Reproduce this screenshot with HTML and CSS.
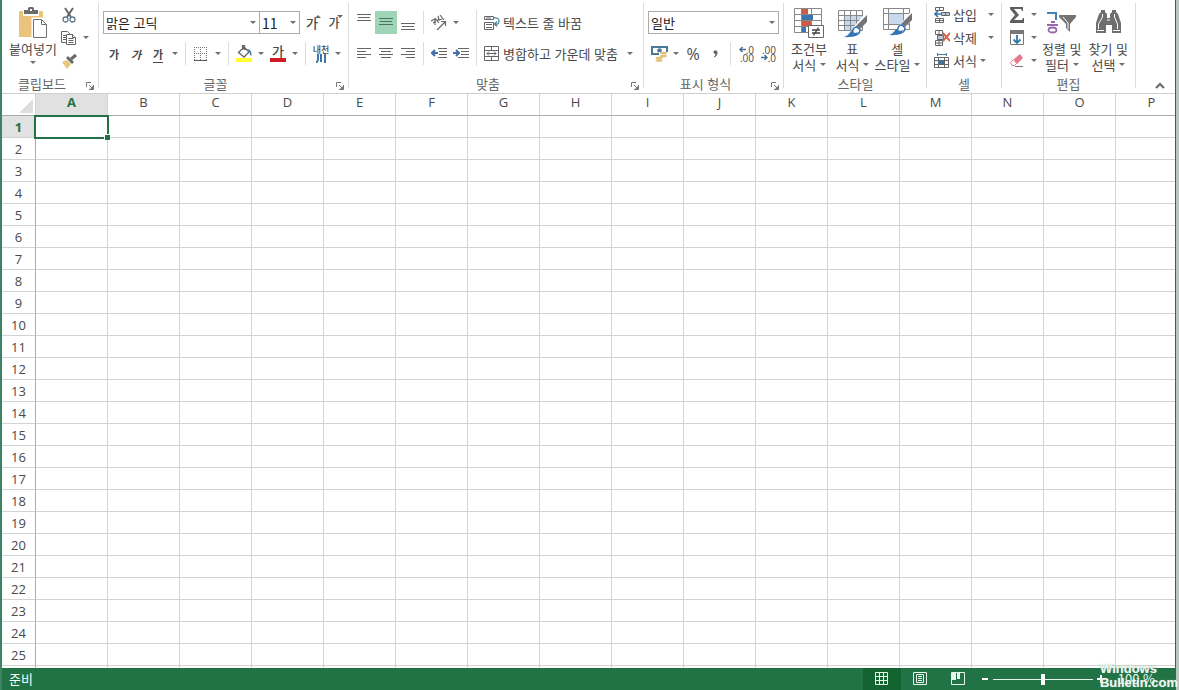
FILE: index.html
```html
<!DOCTYPE html>
<html lang="ko">
<head>
<meta charset="utf-8">
<title>스프레드시트</title>
<link rel="stylesheet" href="styles.css">
</head>
<body>
<div class="window">
  <header class="ribbon">
    <section class="group clipboard">
      <div class="group-body big-row">
        <button class="big paste">
          <svg width="30" height="32" viewBox="0 0 30 32"><path fill="#eac47c" d="M1 4h24v26H1z"/><path fill="#fff" d="M5 3h16v6H5z"/><path fill="#6b6b6b" d="M6 3h4V1.500q0-1.500 1.500-1.500h3Q16 0 16 1.500V3h4v4H6z"/><path fill="#fff" d="M12 2h2v2h-2z"/><path fill="#fff" stroke="#fff" stroke-width="4" d="M15.500 12.500h8l5 5v13h-13z"/><path fill="#fff" stroke="#6f6f6f" d="M15.500 12.500h8l5 5v13h-13zM23.500 12.500v5h5"/></svg>
          <span>붙여넣기</span><i class="caret"></i>
        </button>
        <div class="stack clip-stack">
          <button class="icon" aria-label="잘라내기"><svg width="16" height="16" viewBox="0 0 16 16"><g fill="none" stroke="#666"><path stroke-width="2" d="M4 1l6 9M12 1L6 10"/><circle cx="4.500" cy="12.500" r="2.500" stroke="#5f7a91" stroke-width="1.300"/><circle cx="11.500" cy="12.500" r="2.500" stroke="#5f7a91" stroke-width="1.300"/></g></svg></button>
          <div class="row"><button class="icon" aria-label="복사"><svg width="16" height="16" viewBox="0 0 16 16"><g fill="#fff" stroke="#666"><path d="M.5 1.500h6l3 3v8h-9z"/><path d="M2 5.500h4M2 7.500h4M2 9.500h4"/><path d="M5.500 4.500h6l3 3v7h-9z"/><path d="M7.500 8.500h5M7.500 10.500h5M7.500 12.500h5M11.500 4.500v3h3"/></g></svg></button><button class="drop" aria-label="복사 옵션"><i class="caret"></i></button></div>
          <button class="icon" aria-label="서식 복사"><svg width="16" height="16" viewBox="0 0 16 16"><path fill="#e6c67f" d="M1 9l5-2 4 4-4 5z"/><path fill="#666" d="M5 5l2-2 6 6-2 2z"/><path fill="none" stroke="#666" stroke-width="3" d="M10 6l5-4"/></svg></button>
        </div>
      </div>
      <div class="caption with-launch"><span>클립보드</span><button class="launch" aria-label="클립보드 설정"><svg width="8" height="8" viewBox="0 0 8 8"><path fill="none" stroke="#777" d="M.5 5V.5H5M3 3l3 3M7.500 3v4.500H3"/><path fill="#777" d="M7 4v3H4z"/></svg></button></div>
    </section>

    <section class="group font">
      <div class="group-body rows">
        <div class="row">
          <label class="combo family"><select aria-label="글꼴"><option>맑은 고딕</option></select></label><label class="combo size"><select aria-label="글꼴 크기"><option>11</option></select></label>
          <button class="icon glyph grow" aria-label="글꼴 크게"><span>가</span><i class="mark up"></i></button>
          <button class="icon glyph shrink" aria-label="글꼴 작게"><span>가</span><i class="mark"></i></button>
        </div>
        <div class="row">
          <button class="icon letter" aria-label="굵게"><b>가</b></button>
          <button class="icon letter" aria-label="기울임꼴"><em>가</em></button>
          <button class="icon letter" aria-label="밑줄"><u>가</u></button>
          <button class="drop" aria-label="밑줄 옵션"><i class="caret"></i></button>
          <i class="sep"></i>
          <button class="icon" aria-label="테두리"><svg width="14" height="14" viewBox="0 0 14 14"><path fill="none" stroke="#777" stroke-dasharray="1 1" d="M0 .5h14M0 6.500h14M.5 0v13M6.500 0v13M12.500 0v13"/><path stroke="#555" d="M0 13.500h13"/></svg></button>
          <button class="drop" aria-label="테두리 옵션"><i class="caret"></i></button>
          <i class="sep"></i>
          <button class="icon" aria-label="채우기 색"><svg width="16" height="17" viewBox="0 0 16 17"><path fill="#ff3" d="M0 13h16v4H0z"/><path fill="#fff" stroke="#666" stroke-width="1.300" d="M2.500 7.500L8 2l5 5-5 5zM6.500 5V.7h2V5"/><path fill="#4276ae" d="M11 4q5 0 4.500 7-2-1-2-4z"/></svg></button>
          <button class="drop" aria-label="채우기 색 옵션"><i class="caret"></i></button>
          <button class="icon fontcolor" aria-label="글꼴 색"><span>가</span></button>
          <button class="drop" aria-label="글꼴 색 옵션"><i class="caret"></i></button>
          <i class="sep"></i>
          <button class="icon phonetic" aria-label="윗주"><span>내천</span><svg width="10" height="9" viewBox="0 0 10 9"><path fill="none" stroke="#3f73a8" stroke-width="2" d="M2 0v5q0 3-2 3.500M5 0v8M9 0v9"/></svg></button>
          <button class="drop" aria-label="윗주 옵션"><i class="caret"></i></button>
        </div>
      </div>
      <div class="caption with-launch"><span>글꼴</span><button class="launch" aria-label="글꼴 설정"><svg width="8" height="8" viewBox="0 0 8 8"><path fill="none" stroke="#777" d="M.5 5V.5H5M3 3l3 3M7.500 3v4.500H3"/><path fill="#777" d="M7 4v3H4z"/></svg></button></div>
    </section>

    <section class="group align">
      <div class="group-body columns">
        <div class="rows">
          <div class="row">
            <button class="icon" aria-label="위쪽 맞춤"><svg width="14" height="17" viewBox="0 0 14 17"><path stroke="#666" d="M0 .5h14M1 3.500h12M0 6.500h14"/></svg></button>
            <button class="icon on" aria-label="가운데 맞춤(세로)"><svg width="14" height="17" viewBox="0 0 14 17"><path stroke="#4f6f60" d="M0 4.500h14M1 7.500h12M0 10.500h14"/></svg></button>
            <button class="icon" aria-label="아래쪽 맞춤"><svg width="14" height="17" viewBox="0 0 14 17"><path stroke="#666" d="M0 9.500h14M1 12.500h12M0 15.500h14"/></svg></button>
            <i class="sep"></i>
            <button class="icon" aria-label="방향"><svg width="16" height="16" viewBox="0 0 16 16"><g fill="none" stroke="#666" stroke-width="1.200"><path d="M0 6l4-2 0 6M2 8l3-2M4 3l4 5M6 6l2-2M7 1l1 4 3-1M9 0l4 5M6 15l8-8M10 6.500h4.500V11"/></g></svg></button>
            <button class="drop" aria-label="방향 옵션"><i class="caret"></i></button>
          </div>
          <div class="row">
            <button class="icon" aria-label="왼쪽 맞춤"><svg width="14" height="11" viewBox="0 0 14 11"><path stroke="#666" d="M0 .5h14M0 3.500h9M0 6.500h14M0 9.500h9"/></svg></button>
            <button class="icon" aria-label="가운데 맞춤"><svg width="14" height="11" viewBox="0 0 14 11"><path stroke="#666" d="M0 .5h14M2 3.500h10M0 6.500h14M2 9.500h10"/></svg></button>
            <button class="icon" aria-label="오른쪽 맞춤"><svg width="14" height="11" viewBox="0 0 14 11"><path stroke="#666" d="M0 .5h14M5 3.500h9M0 6.500h14M5 9.500h9"/></svg></button>
            <i class="sep"></i>
            <button class="icon" aria-label="내어쓰기"><svg width="16" height="11" viewBox="0 0 16 11"><path stroke="#666" d="M7 .5h9M8 3.500h8M8 6.500h8M7 9.500h9"/><path fill="none" stroke="#3f6ea8" stroke-width="2" d="M7 5H1M4 2L1 5l3 3"/></svg></button>
            <button class="icon" aria-label="들여쓰기"><svg width="16" height="11" viewBox="0 0 16 11"><path stroke="#666" d="M5 .5h11M8 3.500h8M8 6.500h8M5 9.500h11"/><path fill="none" stroke="#3f6ea8" stroke-width="2" d="M0 5h6M3 2l3 3-3 3"/></svg></button>
          </div>
        </div>
        <i class="sep"></i>
        <div class="rows">
          <button class="wide"><svg width="16" height="16" viewBox="0 0 16 16"><g fill="none" stroke="#666"><path d="M.5 1.500h9v3h-9zM.5 7.500h9v7h-9zM2 9.500h6M2 12.500h6M2 3h5"/></g><path fill="none" stroke="#477c9c" stroke-width="1.200" d="M9 3q6-1 6 3t-4 3M13 6.500L10.500 9l2.500 2.500"/></svg><span>텍스트 줄 바꿈</span></button>
          <div class="row"><button class="wide"><svg width="16" height="16" viewBox="0 0 16 16"><path fill="none" stroke="#666" d="M.5.500h14v14H.5zM0 4.500h15M0 10.500h15M7.500 0v4M7.500 11v4M3 7.500h9M5 5.500l-2 2 2 2M10 5.500l2 2-2 2"/></svg><span>병합하고 가운데 맞춤</span></button><button class="drop merge-drop" aria-label="병합 옵션"><i class="caret"></i></button></div>
        </div>
      </div>
      <div class="caption with-launch"><span>맞춤</span><button class="launch" aria-label="맞춤 설정"><svg width="8" height="8" viewBox="0 0 8 8"><path fill="none" stroke="#777" d="M.5 5V.5H5M3 3l3 3M7.500 3v4.500H3"/><path fill="#777" d="M7 4v3H4z"/></svg></button></div>
    </section>

    <section class="group number">
      <div class="group-body rows">
        <label class="combo format"><select aria-label="표시 형식"><option>일반</option></select></label>
        <div class="row">
          <button class="icon" aria-label="회계 표시 형식"><svg width="17" height="17" viewBox="0 0 17 17"><path fill="#fff" stroke="#47799a" stroke-width="2" d="M1 2h15v7H1z"/><circle cx="8.500" cy="5.500" r="2.300" fill="#47799a"/><path fill="#fff" d="M8 7h9v9H5v-5h3z"/><g fill="#e3bd75"><ellipse cx="12.500" cy="8" rx="3.500" ry="1.300"/><ellipse cx="12.500" cy="11" rx="3.500" ry="1.300"/><ellipse cx="8" cy="13" rx="3.500" ry="1.300"/><ellipse cx="8" cy="15.500" rx="3.500" ry="1.300"/></g></svg></button>
          <button class="drop" aria-label="회계 옵션"><i class="caret"></i></button>
          <button class="icon percent" aria-label="백분율 스타일">%</button>
          <button class="icon" aria-label="쉼표 스타일"><svg width="5" height="8" viewBox="0 0 6 9"><path fill="#666" d="M3 0q2.500 0 2.500 3 0 4-4 5.500L1 7.500Q3 6.500 3 4.500.5 4.500.5 2.200.5 0 3 0z"/></svg></button>
          <i class="sep"></i>
          <button class="icon decimals" aria-label="자릿수 늘림"><span><svg width="7" height="7" viewBox="0 0 7 7"><path fill="none" stroke="#3f6f9c" stroke-width="1.400" d="M7 3.500H1M3.500 1L1 3.500 3.500 6"/></svg>.0</span><span>.00</span></button>
          <button class="icon decimals" aria-label="자릿수 줄임"><span>.00</span><span><svg width="7" height="7" viewBox="0 0 7 7"><path fill="none" stroke="#3f6f9c" stroke-width="1.400" d="M0 3.500h6M3.500 1L6 3.500 3.500 6"/></svg>.0</span></button>
        </div>
      </div>
      <div class="caption with-launch"><span>표시 형식</span><button class="launch" aria-label="표시 형식 설정"><svg width="8" height="8" viewBox="0 0 8 8"><path fill="none" stroke="#777" d="M.5 5V.5H5M3 3l3 3M7.500 3v4.500H3"/><path fill="#777" d="M7 4v3H4z"/></svg></button></div>
    </section>

    <section class="group styles">
      <div class="group-body big-row">
        <button class="big">
          <svg width="32" height="32" viewBox="0 0 32 32"><path fill="#fff" stroke="#888" d="M1.500 1.500h27v24h-27zM1 7.500h28M1 13.500h28M1 19.500h28M8.500 1v25M18.500 1v25"/><path fill="#cf5b45" d="M9 2h6v5H9zM9 14h9v5H9z"/><path fill="#3c74ad" d="M9 8h11v5H9zM9 20h4v5H9z"/><path fill="#fff" stroke="#666" d="M15.500 18.500h15v12h-15z"/><path fill="none" stroke="#444" stroke-width="1.300" d="M19 23h8M19 26h8M25.500 20.500l-5 8"/></svg>
          <span>조건부</span><span>서식 <i class="caret"></i></span>
        </button>
        <button class="big">
          <svg width="32" height="32" viewBox="0 0 32 32"><path fill="#fff" d="M2 3h25v21H2z"/><path fill="#c5d9ec" d="M8 8h19v16H8z"/><path fill="none" stroke="#888" d="M2.500 3.500h24v20h-24zM2 8.500h25M2 13.500h25M2 18.500h25M8.500 3v21M14.500 3v21M20.500 3v21"/><path fill="none" stroke="#fff" stroke-width="6" d="M30 10L19 23"/><path fill="#747474" d="M31 8v7l-7 7-4-3z"/><path fill="#fff" stroke="#3475b5" stroke-width="1.500" d="M21 20l3 3q0 5-8 6l1-6q1-3 4-3z"/><path fill="#3475b5" d="M15 24l4 2 3-1q-2 6-14 5 4-1 7-6z"/></svg>
          <span>표</span><span>서식 <i class="caret"></i></span>
        </button>
        <button class="big">
          <svg width="32" height="32" viewBox="0 0 32 32"><path fill="#fff" stroke="#888" d="M2.500 1.500h26v21h-26zM2 6.500h27M2 17.500h27M7.500 1v22M22.500 1v22"/><path fill="#c8d9ed" d="M8 7h14v10H8z"/><path fill="none" stroke="#fff" stroke-width="6" d="M31 8L20 21"/><path fill="#747474" d="M31 6v7l-7 7-4-3z"/><path fill="#fff" stroke="#3475b5" stroke-width="1.500" d="M21 18l3 3q0 5-8 6l1-6q1-3 4-3z"/><path fill="#3475b5" d="M15 22l4 2 3-1q-2 6-14 5 4-1 7-6z"/></svg>
          <span>셀</span><span>스타일 <i class="caret"></i></span>
        </button>
      </div>
      <div class="caption"><span>스타일</span></div>
    </section>

    <section class="group cells">
      <div class="group-body stack">
        <div class="row"><button class="wide"><svg width="16" height="16" viewBox="0 0 16 16"><g fill="#fff" stroke="#666"><path d="M1.500.500h8v3h-8zM5.500.500v3M1.500 11.500h8v4h-8zM5.500 11.500v4M1.500 13.500h8"/><path fill="#b9cada" d="M7.500 5.500h8v3h-8zM11.500 5.500v3"/></g><path fill="none" stroke="#3673a8" stroke-width="1.700" d="M8 7H1M4 4L1 7l3 3"/></svg><span>삽입</span></button><button class="drop" aria-label="삽입 옵션"><i class="caret"></i></button></div>
        <div class="row"><button class="wide"><svg width="16" height="16" viewBox="0 0 16 16"><g fill="#fff" stroke="#666"><path d="M1.500.500h7v4h-7zM5 .5v4M1.500 10.500h7v5h-7zM5 10.500v5M1.500 13h7"/><path fill="#b9cada" d="M3.500 5.500h6v4h-6z"/></g><path stroke="#d3654d" stroke-width="2" d="M9 3l7 8M16 3l-7 8"/></svg><span>삭제</span></button><button class="drop" aria-label="삭제 옵션"><i class="caret"></i></button></div>
        <div class="row"><button class="wide"><svg width="16" height="16" viewBox="0 0 16 16"><path fill="none" stroke="#47799a" d="M3 1.500h10M3.500 0v3M12.500 0v3"/><path fill="#fff" stroke="#666" d="M.5 4.500h14v10H.5zM0 7.500h15M0 11.500h15M4.500 4v11M10.500 4v11"/><path fill="#477494" d="M4 7h6v4H4z"/></svg><span>서식</span><i class="caret"></i></button></div>
      </div>
      <div class="caption"><span>셀</span></div>
    </section>

    <section class="group editing">
      <div class="group-body columns">
        <div class="stack">
          <div class="row"><button class="icon" aria-label="합계"><svg width="16" height="16" viewBox="0 0 16 16"><path fill="#5f5f5f" d="M1 0h13v4h-1l-1-2H5l5 6-5 5h8l1-2h1v5H1v-2l5-6-5-6z"/></svg></button><button class="drop" aria-label="합계 옵션"><i class="caret"></i></button></div>
          <div class="row"><button class="icon" aria-label="채우기"><svg width="16" height="16" viewBox="0 0 16 16"><path fill="#fff" stroke="#777" d="M1.500.500h13v14h-13z"/><path fill="#777" d="M1 0h14v4H1z"/><path fill="none" stroke="#2f78ad" stroke-width="1.800" d="M8 5v8M4.500 9.500L8 13l3.500-3.500"/></svg></button><button class="drop" aria-label="채우기 옵션"><i class="caret"></i></button></div>
          <div class="row"><button class="icon" aria-label="지우기"><svg width="16" height="16" viewBox="0 0 16 16"><path fill="#e5788f" d="M5 6l6-5 3 4-6 6z"/><path fill="#fff" stroke="#e5788f" d="M4.500 6.500l3 4-2 2H3l-1.500-3z"/><path stroke="#777" d="M6 13.500h8"/></svg></button><button class="drop" aria-label="지우기 옵션"><i class="caret"></i></button></div>
        </div>
        <div class="big-row">
          <button class="big">
            <svg width="32" height="32" viewBox="0 0 32 32"><path fill="none" stroke="#3f82b8" stroke-width="2" d="M1 6h9v7"/><g fill="none" stroke="#9668ad" stroke-width="1.800"><path d="M5 15h4M1 18h11"/><ellipse cx="6.500" cy="23" rx="4" ry="2.500"/></g><path fill="#747474" d="M13 8h17v2l-6 7v8l-4-4v-4l-7-7z"/><path fill="none" stroke="#fff" d="M17 10l5 6v6"/></svg>
            <span>정렬 및</span><span>필터 <i class="caret"></i></span>
          </button>
          <button class="big">
            <svg width="32" height="32" viewBox="0 0 32 32"><path fill="#6e6e6e" d="M9 5V3h4v2l2 2v4h3V7l2-2V3h4v2l2 2 3 9v10h-9v-8h-6v8H4V16l3-9z"/><path fill="none" stroke="#fff" d="M10.500 7v3l-4 7v5M22.500 7v3l3 7v5M15 13h3"/><path stroke="#fff" d="M5 23.500h7M21 23.500h7"/></svg>
            <span>찾기 및</span><span>선택 <i class="caret"></i></span>
          </button>
        </div>
      </div>
      <div class="caption"><span>편집</span></div>
    </section>
    <button class="collapse" aria-label="리본 메뉴 축소"><svg width="10" height="7" viewBox="0 0 10 7"><path fill="none" stroke="#666" stroke-width="2" d="M1 6l4-4 4 4"/></svg></button>
  </header>

  <main class="sheet">
    <table class="grid">
      <thead><tr id="columns"><th class="corner"><svg width="14" height="14" viewBox="0 0 14 14"><path fill="#dedede" d="M14 0v14H0z"/></svg></th></tr></thead>
      <tbody id="cells"></tbody>
    </table>
  </main>

  <footer class="status">
    <span class="ready">준비</span>
    <div class="views">
      <button class="view active" aria-label="기본"><svg width="14" height="14" viewBox="0 0 14 14"><path fill="none" stroke="#e6f5ea" d="M.5.500h12v12H.5zM4.500 0v13M8.500 0v13M0 4.500h13M0 8.500h13"/></svg></button>
      <button class="view" aria-label="페이지 레이아웃"><svg width="14" height="14" viewBox="0 0 14 14"><path fill="none" stroke="#e6f5ea" d="M.5.500h13v12H.5zM3.500 2.500h7v8h-7zM5 4.500h4M5 6.500h4M5 8.500h4"/></svg></button>
      <button class="view" aria-label="페이지 나누기 미리 보기"><svg width="14" height="14" viewBox="0 0 14 14"><path fill="none" stroke="#e6f5ea" d="M.5.500h13v12H.5z"/><path fill="#e6f5ea" d="M1 1h4v7H1zM6 1h3v6H6z"/></svg></button>
    </div>
    <div class="zoom">
      <button class="step" aria-label="축소"><svg width="8" height="8" viewBox="0 0 8 8"><path fill="#fff" d="M1 3h6v2H1z"/></svg></button>
      <input type="range" min="0" max="100" value="50" aria-label="확대/축소">
      <button class="step" aria-label="확대"><svg width="8" height="8" viewBox="0 0 8 8"><path fill="#fff" d="M0 3h8v2H0zM3 0h2v8H3z"/></svg></button>
      <button class="level">100 %</button>
    </div>
  </footer>
</div>
<div class="watermark">Windows<br>Bulletin.com</div>
<script src="sheet.js"></script>
</body>
</html>
```
FILE: styles.css
```css
* { box-sizing: border-box; }
body {
  position: relative;
  margin: 0;
  padding-right: 3px;
  background: #b9c6bf;
  color: #4a4a4a;
  font: 13px/16px "Noto Sans CJK KR", sans-serif;
}
svg { display: block; flex: none; }
button {
  margin: 0;
  padding: 0;
  border: 0;
  background: none;
  color: inherit;
  font: inherit;
}
.window {
  display: flex;
  flex-direction: column;
  height: 100vh;
  overflow: hidden;
  background: #fff;
  border-left: 2px solid #3c8463;
  border-right: 1px solid #217346;
}

/* Ribbon */
.ribbon {
  display: flex;
  flex: none;
  height: 94px;
  padding-top: 3px;
  border-bottom: 1px solid #cfcfcf;
}
.group {
  display: flex;
  flex-direction: column;
  flex: none;
  padding: 0 5px 0 4px;
  background: linear-gradient(#dcdcdc, #dcdcdc) right top / 1px 85px no-repeat;
}
.clipboard { width: 97px; }
.font { width: 250px; }
.align { width: 295px; }
.number { width: 140px; }
.styles { width: 143px; }
.cells { width: 75px; }
.editing { width: 134px; }
.group-body { flex: none; height: 73px; }
.row { display: flex; align-items: center; }
.rows { display: flex; flex-direction: column; gap: 8px; }
.rows > * { height: 23px; }
.group-body.rows, .columns > .rows { padding-top: 8px; }
.columns { display: flex; }
.stack > * { height: 23px; }
.big-row { display: flex; justify-content: space-between; }
.caption {
  position: relative;
  height: 18px;
  text-align: center;
  color: #666;
}
.with-launch { padding-right: 16px; }
.launch { position: absolute; right: 0; top: 6px; }
.icon {
  position: relative;
  display: flex;
  align-items: center;
  justify-content: center;
  flex: none;
  width: 22px;
  height: 23px;
}
.icon.on { background: #9fd5b7; }
.drop {
  display: flex;
  align-items: center;
  justify-content: center;
  flex: none;
  width: 12px;
  height: 23px;
}
.merge-drop { margin-left: 6px; }
.caret {
  display: inline-block;
  flex: none;
  border: 3px solid transparent;
  border-top-color: #707070;
  border-bottom: 0;
}
.sep {
  flex: none;
  width: 1px;
  height: 23px;
  margin: 0 4px;
  background: #dcdcdc;
}
.columns > .sep { height: 56px; margin-top: 7px; }
.wide {
  display: flex;
  align-items: center;
  gap: 3px;
  padding: 0 0 0 3px;
  white-space: nowrap;
}
.big {
  display: flex;
  flex-direction: column;
  align-items: center;
  white-space: nowrap;
  padding-top: 4px;
}
.big svg { margin-bottom: 2px; }
.big .caret { vertical-align: 4px; }
.paste .caret { margin-top: 4px; }
.clipboard .group-body { justify-content: flex-start; gap: 1px; padding-left: 3px; }
.styles .big { min-width: 42px; }
.styles .group-body { padding-right: 3px; }
.styles { padding: 0 4px; }
.cells .wide { width: 52px; }
.cells .drop { margin-left: 3px; }
.editing .big-row { flex: 1; padding-right: 3px; }
.editing .stack { margin-right: 2px; }

.combo { position: relative; display: block; flex: none; }
.combo::after {
  content: "";
  position: absolute;
  right: 4px;
  top: 10px;
  border: 3px solid transparent;
  border-top-color: #707070;
  border-bottom: 0;
  pointer-events: none;
}
.combo select {
  display: block;
  appearance: none;
  width: 100%;
  height: 23px;
  padding: 0 2px;
  border: 1px solid #ababab;
  border-radius: 0;
  background: #fff;
  color: #222;
  font: inherit;
}
.family { width: 157px; }
.size { width: 40px; }
.size select { border-left: 0; font-size: 14px; }
.glyph { font-size: 12px; font-weight: 500; }
.grow { margin-left: 1px; }
.grow span { font-size: 13px; }
.mark {
  position: absolute;
  top: 4px;
  right: 2px;
  border: 3px solid transparent;
  border-top-color: #666;
  border-bottom: 0;
}
.mark.up { border-top: 0; border-bottom: 3px solid #666; }
.letter { font-size: 11px; }
.letter em, .letter u { font-weight: 700; }
.letter u { text-underline-offset: 3px; }
.fontcolor span {
  width: 16px;
  height: 17px;
  border-bottom: 4px solid #cf1b20;
  font-size: 13px;
  font-weight: 500;
  line-height: 12px;
}
.phonetic { flex-direction: column; font-size: 9px; line-height: 9px; font-weight: 500; }
.phonetic span { white-space: nowrap; }
.percent { font: 16px/20px "Open Sans", sans-serif; }
.decimals {
  flex-direction: column;
  align-items: flex-end;
  padding-right: 3px;
  font: 10px/8px "Open Sans", sans-serif;
}
.decimals span { display: flex; align-items: center; }
.collapse { align-self: flex-end; margin: 0 10px 4px auto; }

/* Worksheet */
.sheet { flex: 1; min-height: 0; overflow: hidden; }
.grid {
  table-layout: fixed;
  width: 1186px;
  border-spacing: 0;
  font-family: "Open Sans", "Noto Sans CJK KR", sans-serif;
}
.grid th, .grid td {
  width: 72px;
  height: 22px;
  padding: 0;
  border-right: 1px solid #d2d2d2;
  border-bottom: 1px solid #d2d2d2;
  font-weight: 400;
}
.grid thead th { padding-bottom: 5px; border-bottom-color: #ababab; }
.grid tbody th { border-right-color: #ababab; }
.grid .corner { width: 34px; border-right-color: #d2d2d2; padding: 2px 2px 0; }
.corner svg { margin-left: auto; }
.grid th.current { background: #e1e1e1; color: #217346; font-weight: 700; }
.selected { position: relative; }
.cursor {
  position: absolute;
  inset: -1px -2px -2px -2px;
  border: 2px solid #217346;
}
.cursor::after {
  content: "";
  position: absolute;
  right: -3px;
  bottom: -3px;
  width: 5px;
  height: 5px;
  background: #217346;
  border: solid #fff;
  border-width: 1px 0 0 1px;
  box-sizing: content-box;
}

/* Status bar */
.status {
  display: flex;
  align-items: center;
  flex: none;
  height: 22px;
  padding: 0 20px 0 7px;
  background: #217346;
  color: #f2fff6;
}
.views { display: flex; margin-left: auto; }
.view {
  display: flex;
  align-items: center;
  justify-content: center;
  width: 38px;
  height: 22px;
}
.view.active { background: #12632f; }
.zoom { display: flex; align-items: center; }
.step { padding: 0 4px; }
.zoom input {
  appearance: none;
  width: 100px;
  height: 12px;
  margin: 0;
  background: linear-gradient(#e6f5ea, #e6f5ea) center / 100% 1px no-repeat;
}
.zoom input::-webkit-slider-thumb {
  appearance: none;
  width: 4px;
  height: 11px;
  background: #fff;
}
.level { width: 46px; text-align: right; }
.watermark {
  position: absolute;
  right: 1px;
  bottom: 0;
  color: #edf7f0;
  font: 700 13px/14px "Liberation Sans", sans-serif;
  text-shadow: 0 0 1px #8fb09c;
}
```
FILE: sheet.js
```js
const columns = "ABCDEFGHIJKLMNOP".split("");
const head = document.getElementById("columns");
const body = document.getElementById("cells");

function header(text, current) {
  const th = document.createElement("th");
  th.textContent = text;
  if (current) th.className = "current";
  return th;
}

columns.forEach((name, i) => head.append(header(name, i === 0)));

for (let r = 1; r <= 26; r++) {
  const row = document.createElement("tr");
  row.append(header(r <= 25 ? r : "", r === 1));
  columns.forEach((name, i) => {
    const td = document.createElement("td");
    if (r === 1 && i === 0) {
      td.className = "selected";
      const cursor = document.createElement("div");
      cursor.className = "cursor";
      td.append(cursor);
    }
    row.append(td);
  });
  body.append(row);
}
```
